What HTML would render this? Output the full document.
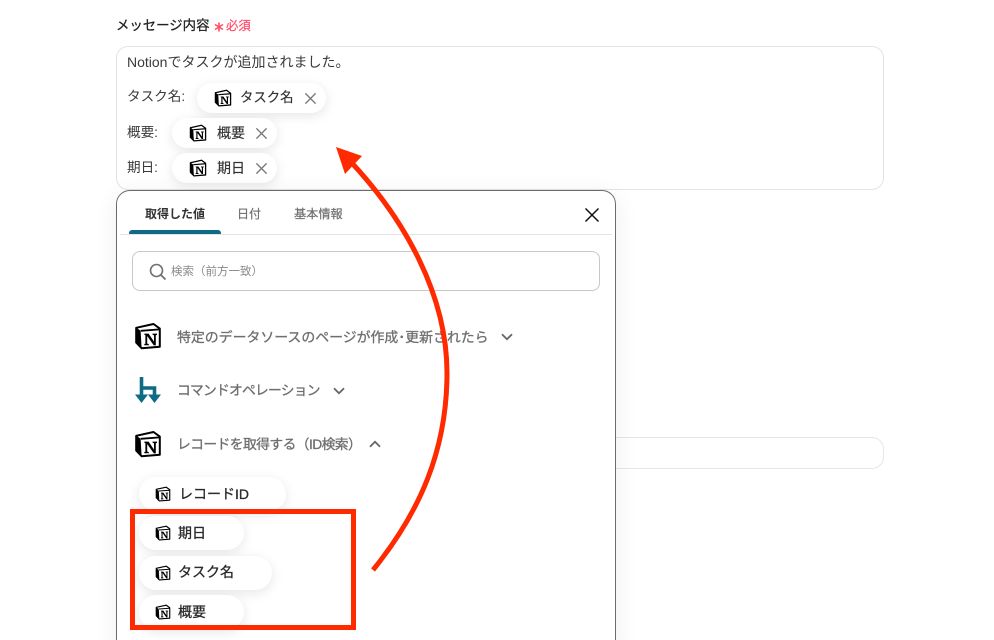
<!DOCTYPE html>
<html lang="ja">
<head>
<meta charset="utf-8">
<style>
html,body{margin:0;padding:0;background:#fff;width:994px;height:640px;overflow:hidden;}
#w{width:994px;height:640px;position:relative;overflow:hidden;font-family:"Liberation Sans","Noto Sans CJK JP",sans-serif;color:#2b2b2b;}
.a{position:absolute;white-space:nowrap;line-height:20px;}
.box{position:absolute;box-sizing:border-box;}
.pill{position:absolute;background:#fff;border-radius:20px;box-shadow:0 3px 12px rgba(0,0,0,.10);}
.t{font-size:13.6px;color:#3a3a3a;}
.p{font-size:13.4px;color:#333;-webkit-text-stroke:.15px #333;}
.g{font-size:13.8px;color:#6f6f6f;-webkit-text-stroke:.3px #6f6f6f;}
.b{font-size:14px;color:#2a2a2a;-webkit-text-stroke:.3px #2a2a2a;}
svg{position:absolute;display:block;overflow:visible;}
</style>
</head>
<body>
<div id="w">
<svg width="0" height="0" style="position:absolute">
<defs>
<symbol id="n" viewBox="0 0 28 28">
<path d="M2.2 5.8 L19.5 2 L25.8 6.6 L25.8 24.8 L7.6 26.2 L2.2 20.6 Z" fill="#fff" stroke="#000" stroke-width="2" stroke-linejoin="round"/>
<path d="M6.8 8.8 L25.8 7.4" fill="none" stroke="#000" stroke-width="1.8"/>
<path d="M2.2 5.8 L6.6 8.6 L7.6 26.2 L5 23.5 L2.2 20.6 Z" fill="#000"/>
<path d="M10.4 11.6 L14.6 11.6 L20 19.6 L20 13.2 L18.6 12.9 L18.6 11.6 L23 11.6 L23 12.9 L21.8 13.2 L21.8 23.4 L19.8 23.4 L13.2 14 L13.2 21.6 L14.8 22 L14.8 23.3 L10.3 23.3 L10.3 22 L11.4 21.6 L11.4 13.1 L10.4 12.9 Z" fill="#000"/>
</symbol>
<symbol id="x" viewBox="0 0 14 14">
<path d="M1.5 1.5 L12.5 12.5 M12.5 1.5 L1.5 12.5" stroke="#777" stroke-width="1.4" fill="none"/>
</symbol>
</defs>
</svg>

<div class="a" style="left:116px;top:16px;font-size:13.4px;color:#222;-webkit-text-stroke:.25px #222;">メッセージ内容</div>
<svg style="left:214px;top:22px" width="10" height="10" viewBox="0 0 10 10"><path d="M5 .5V9.5M1 2.5L9 7.5M9 2.5L1 7.5" stroke="#ff4d6a" stroke-width="1.6"/></svg>
<div class="a" style="left:226px;top:16px;font-size:12.4px;color:#ff4d6a;-webkit-text-stroke:.2px #ff4d6a;">必須</div>

<div class="box" style="left:116px;top:46px;width:768px;height:144px;border:1px solid #e3e3e8;border-radius:12px;"></div>
<div class="a" style="left:127px;top:52px;font-size:14px;color:#3a3a3a;">Notionでタスクが追加されました。</div>

<div class="a t" style="left:127px;top:87px;">タスク名:</div>
<div class="pill" style="left:197px;top:83px;width:129px;height:30px;"></div>
<svg style="left:214px;top:89px" width="18" height="18"><use href="#n" width="18" height="18"/></svg>
<div class="a p" style="left:240px;top:88px;">タスク名</div>
<svg style="left:304px;top:92px" width="13" height="13"><use href="#x" width="13" height="13"/></svg>

<div class="a t" style="left:127px;top:123px;">概要:</div>
<div class="pill" style="left:172px;top:118px;width:105px;height:30px;"></div>
<svg style="left:189px;top:124px" width="18" height="18"><use href="#n" width="18" height="18"/></svg>
<div class="a p" style="left:217px;top:123px;font-size:14px;">概要</div>
<svg style="left:255px;top:127px" width="13" height="13"><use href="#x" width="13" height="13"/></svg>

<div class="a t" style="left:127px;top:158px;">期日:</div>
<div class="pill" style="left:172px;top:153px;width:105px;height:30px;"></div>
<svg style="left:189px;top:159px" width="18" height="18"><use href="#n" width="18" height="18"/></svg>
<div class="a p" style="left:217px;top:158px;font-size:14px;">期日</div>
<svg style="left:255px;top:162px" width="13" height="13"><use href="#x" width="13" height="13"/></svg>

<div class="box" style="left:600px;top:437px;width:284px;height:32px;border:1px solid #e6e6e6;border-radius:12px;"></div>

<div class="box" style="left:116px;top:190px;width:500px;height:470px;background:#fff;border:1px solid #6b6b6b;border-radius:14px;box-shadow:0 4px 24px rgba(0,0,0,.07);"></div>

<div class="a" style="left:145px;top:204px;font-size:12px;font-weight:700;color:#333;">取得した値</div>
<div class="a" style="left:237px;top:204px;font-size:12px;color:#6f6f6f;-webkit-text-stroke:.2px #6f6f6f;">日付</div>
<div class="a" style="left:294px;top:204px;font-size:12.2px;color:#6f6f6f;-webkit-text-stroke:.2px #6f6f6f;">基本情報</div>
<div class="box" style="left:129px;top:230px;width:92px;height:4px;background:#0f6b85;border-radius:3px 3px 0 0;"></div>
<div class="box" style="left:120px;top:234px;width:492px;height:1px;background:#e3e3e3;"></div>
<svg style="left:585px;top:208px" width="14" height="14" viewBox="0 0 14 14"><path d="M.5 .5L13.5 13.5M13.5 .5L.5 13.5" stroke="#111" stroke-width="1.5"/></svg>

<div class="box" style="left:132px;top:251px;width:468px;height:40px;border:1px solid #c8c8c8;border-radius:8px;"></div>
<svg style="left:149px;top:263px" width="18" height="18" viewBox="0 0 18 18"><circle cx="7.5" cy="7.5" r="6" fill="none" stroke="#707070" stroke-width="1.6"/><path d="M12 12L16.5 16.5" stroke="#707070" stroke-width="1.8"/></svg>
<div class="a" style="left:171px;top:262px;font-size:11.5px;color:#8a8a8a;">検索（前方一致）</div>

<svg style="left:134px;top:322px" width="28" height="28"><use href="#n" width="28" height="28"/></svg>
<div class="a g" style="left:177px;top:327px;font-size:13.9px;">特定のデータソースのページが作成･更新されたら</div>
<svg style="left:501px;top:333px" width="12" height="8" viewBox="0 0 12 8"><path d="M1 1.2L6 6.2L11 1.2" fill="none" stroke="#666" stroke-width="1.8"/></svg>

<svg style="left:135px;top:377px" width="26" height="27" viewBox="0 0 26 27">
<path d="M6.5 0V19M6.5 11H19.5V19" fill="none" stroke="#0f6b85" stroke-width="3.6"/>
<path d="M0 17.5H13L6.5 26ZM13 17.5H26L19.5 26Z" fill="#0f6b85"/>
</svg>
<div class="a g" style="left:177px;top:381px;letter-spacing:-.8px;">コマンドオペレーション</div>
<svg style="left:333px;top:387px" width="12" height="8" viewBox="0 0 12 8"><path d="M1 1.2L6 6.2L11 1.2" fill="none" stroke="#666" stroke-width="1.8"/></svg>

<svg style="left:134px;top:430px" width="28" height="28"><use href="#n" width="28" height="28"/></svg>
<div class="a g" style="left:177px;top:435px;letter-spacing:-.6px;">レコードを取得する（ID検索）</div>
<svg style="left:369px;top:440px" width="12" height="8" viewBox="0 0 12 8"><path d="M1 6.8L6 1.8L11 6.8" fill="none" stroke="#666" stroke-width="1.8"/></svg>

<div class="pill" style="left:139px;top:477px;width:147px;height:34px;"></div>
<svg style="left:155px;top:486px" width="16" height="16"><use href="#n" width="16" height="16"/></svg>
<div class="a b" style="left:179px;top:484px;">レコードID</div>

<div class="pill" style="left:139px;top:516px;width:105px;height:34px;"></div>
<svg style="left:155px;top:525px" width="16" height="16"><use href="#n" width="16" height="16"/></svg>
<div class="a b" style="left:178px;top:523px;">期日</div>

<div class="pill" style="left:139px;top:556px;width:133px;height:34px;"></div>
<svg style="left:155px;top:565px" width="16" height="16"><use href="#n" width="16" height="16"/></svg>
<div class="a b" style="left:178px;top:562px;">タスク名</div>

<div class="pill" style="left:139px;top:595px;width:105px;height:34px;"></div>
<svg style="left:155px;top:604px" width="16" height="16"><use href="#n" width="16" height="16"/></svg>
<div class="a b" style="left:178px;top:602px;">概要</div>

<div class="box" style="left:130px;top:509px;width:226px;height:121px;border:5px solid #ff2a00;"></div>

<svg style="left:0;top:0" width="994" height="640" viewBox="0 0 994 640">
<path d="M373 570 C 420 512, 447 450, 447 373 C 447 295, 405 220, 351 162" fill="none" stroke="#ff2a00" stroke-width="5"/>
<path d="M336 147 L362 156 L345 174 Z" fill="#ff2a00"/>
</svg>
</div>
</body>
</html>
